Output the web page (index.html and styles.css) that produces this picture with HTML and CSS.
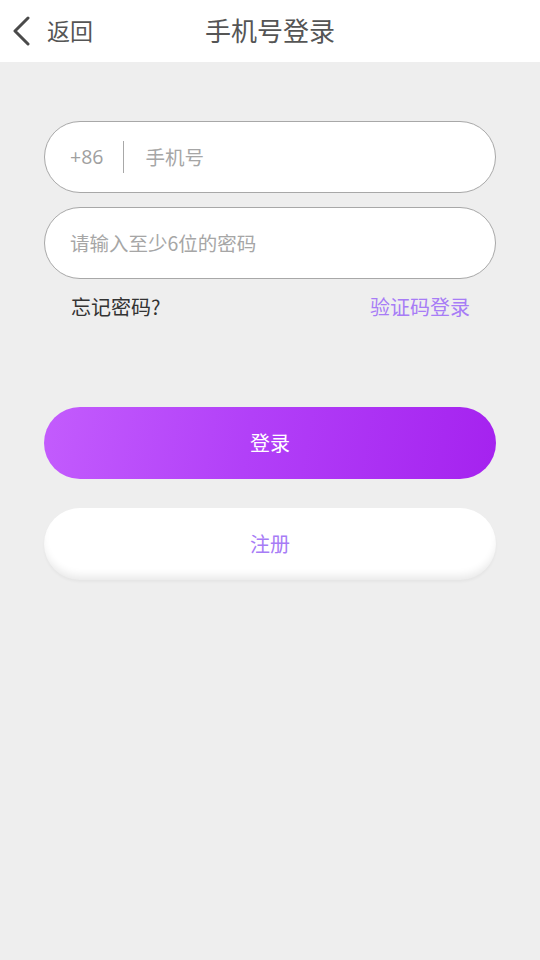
FILE: index.html
```html
<!DOCTYPE html>
<html lang="zh">
<head>
<meta charset="utf-8">
<link rel="stylesheet" href="styles.css">
</head>
<body>
<header class="topbar">
  <div class="back">
    <svg class="chev" width="20" height="30" viewBox="0 0 20 30"><path d="M16 2 L3 15 L16 28" fill="none" stroke="#4a4a4a" stroke-width="3" stroke-linecap="round" stroke-linejoin="round"/></svg>
    <span class="back-text">返回</span>
  </div>
  <h1 class="title">手机号登录</h1>
</header>
<main class="content">
  <div class="field">
    <span class="prefix">+86</span>
    <span class="divider"></span>
    <span class="placeholder">手机号</span>
  </div>
  <div class="field">
    <span class="placeholder">请输入至少6位的密码</span>
  </div>
  <div class="links">
    <span class="forgot">忘记密码?</span>
    <span class="code-login">验证码登录</span>
  </div>
  <button class="btn btn-login">登录</button>
  <button class="btn btn-register">注册</button>
</main>
</body>
</html>
```
FILE: styles.css
```css
* { box-sizing: border-box; }
html, body { margin: 0; padding: 0; }
body {
  width: 540px;
  height: 960px;
  background: #eeeeee;
  font-family: "Noto Sans CJK SC", "Noto Sans", sans-serif;
}
.topbar {
  height: 62px;
  background: #ffffff;
  position: relative;
  display: flex;
  align-items: center;
  justify-content: center;
}
.back {
  position: absolute;
  left: 12px;
  top: 0;
  height: 62px;
  display: flex;
  align-items: center;
}
.chev { display: block; margin-top: -1px; }
.back-text {
  margin-left: 15px;
  font-size: 23px;
  color: #555555;
  line-height: 1;
  margin-top: -2px;
}
.title {
  margin: 0;
  font-size: 26px;
  font-weight: normal;
  color: #555555;
  line-height: 1;
  margin-top: -2px;
}
.content {
  padding: 59px 44px 0 44px;
  display: flex;
  flex-direction: column;
}
.field {
  height: 72px;
  background: #ffffff;
  border: 1px solid #a8a8a8;
  border-radius: 36px;
  display: flex;
  align-items: center;
  padding-left: 25px;
  padding-bottom: 1px;
  margin-bottom: 14px;
}
.field + .field { margin-bottom: 0; }
.prefix {
  font-family: "Open Sans", "Noto Sans", sans-serif;
  font-size: 19.5px;
  color: #a0a0a0;
  line-height: 1;
}
.divider {
  width: 1px;
  height: 32px;
  background: #a8a8a8;
  margin-left: 20px;
  margin-right: 21px;
}
.placeholder {
  font-size: 19.5px;
  color: #a6a6a6;
  line-height: 1;
}
.links {
  display: flex;
  justify-content: space-between;
  padding: 0 26px 0 27px;
  margin-top: 15px;
  font-size: 20px;
  line-height: 26px;
}
.forgot { color: #333333; }
.code-login { color: #a77cf6; }
.btn {
  display: block;
  width: 100%;
  height: 72px;
  border: none;
  border-radius: 36px;
  font-family: "Noto Sans CJK SC", "Noto Sans", sans-serif;
  font-size: 20px;
  padding: 0 0 2px 0;
}
.btn-login {
  margin-top: 87px;
  background: linear-gradient(100deg, #c35cfd 0%, #b240f8 45%, #a522ef 100%);
  color: #ffffff;
}
.btn-register {
  margin-top: 29px;
  background: #ffffff;
  color: #a77cf6;
  box-shadow: inset 0 -7px 8px -3px rgba(0, 0, 0, 0.09), 0 2px 3px rgba(0, 0, 0, 0.04);
}
```
